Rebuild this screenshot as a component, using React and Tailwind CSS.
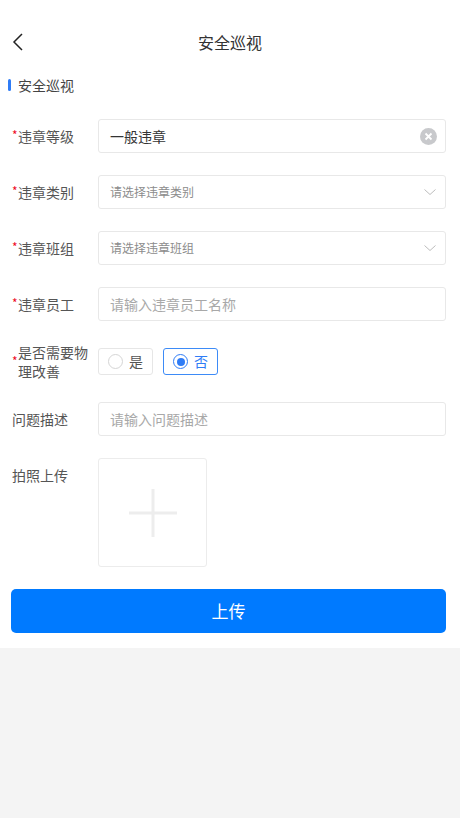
import React, { useState } from 'react';

const font = { fontFamily: '"Noto Sans CJK SC", "Noto Sans", sans-serif' };

const Label = ({ required, children }) => (
  <div className="w-[86px] shrink-0 flex items-center text-[14px] leading-[19px] text-[#555]">
    {required ? (
      <span className="w-[6px] shrink-0 text-[#ee0a24] text-[12px] leading-none -mt-[2px]">*</span>
    ) : null}
    <span className="w-[72px]">{children}</span>
  </div>
);

const Box = ({ children }) => (
  <div className="flex-1 h-[34px] border border-[#e8e8e8] rounded-[3px] flex items-center pl-[11px] pr-[8px]">
    {children}
  </div>
);

const Chevron = () => (
  <svg width="14" height="14" viewBox="0 0 14 14" className="ml-auto">
    <path d="M1.5 4.5 L7 9.5 L12.5 4.5" fill="none" stroke="#bdbdbd" strokeWidth="1" />
  </svg>
);

const App = () => {
  const [improve, setImprove] = useState(false);

  return (
    <div className="min-h-screen bg-[#f4f4f4]" style={font}>
      <div className="bg-white pb-[15px]">
        <div className="h-[60px] mt-[12px] relative flex items-center justify-center">
          <svg width="14" height="20" viewBox="0 0 14 20" className="absolute left-[11px] top-[20px]">
            <path d="M11 2 L3 10 L11 18" fill="none" stroke="#222" strokeWidth="1.5" />
          </svg>
          <span className="text-[16px] text-[#333]">安全巡视</span>
        </div>

        <div className="h-[26px] flex items-center pl-[8px]">
          <span className="w-[3px] h-[12px] rounded-full bg-[#2f7cf6] mr-[7px]" />
          <span className="text-[14px] text-[#444]">安全巡视</span>
        </div>

        <div className="mt-[10px] px-[12px] pr-[14px]">
          <div className="h-[56px] flex items-center">
            <Label required>违章等级</Label>
            <Box>
              <span className="text-[14px] text-[#333]">一般违章</span>
              <span className="ml-auto w-[17px] h-[17px] rounded-full bg-[#c8c9cc] flex items-center justify-center">
                <svg width="9" height="9" viewBox="0 0 9 9">
                  <path d="M1.5 1.5 L7.5 7.5 M7.5 1.5 L1.5 7.5" stroke="#fff" strokeWidth="1.8" />
                </svg>
              </span>
            </Box>
          </div>

          <div className="h-[56px] flex items-center">
            <Label required>违章类别</Label>
            <Box>
              <span className="text-[12px] text-[#8c8c8c]">请选择违章类别</span>
              <Chevron />
            </Box>
          </div>

          <div className="h-[56px] flex items-center">
            <Label required>违章班组</Label>
            <Box>
              <span className="text-[12px] text-[#8c8c8c]">请选择违章班组</span>
              <Chevron />
            </Box>
          </div>

          <div className="h-[56px] flex items-center">
            <Label required>违章员工</Label>
            <Box>
              <span className="text-[14px] text-[#a8a8a8]">请输入违章员工名称</span>
            </Box>
          </div>

          <div className="h-[59px] flex items-center">
            <Label required>是否需要物理改善</Label>
            <div className="flex items-center gap-[10px]">
              <button
                onClick={() => setImprove(true)}
                className={`w-[55px] h-[27px] rounded-[3px] border flex items-center pl-[9px] gap-[6px] ${improve ? 'border-[#3d8bf7]' : 'border-[#e6e6e6]'}`}
              >
                <span className={`w-[15px] h-[15px] rounded-full border flex items-center justify-center ${improve ? 'border-[#2f7cf6]' : 'border-[#d5d5d5]'}`}>
                  {improve ? <span className="w-[8px] h-[8px] rounded-full bg-[#2f7cf6]" /> : null}
                </span>
                <span className={`text-[14px] ${improve ? 'text-[#2f7cf6]' : 'text-[#555]'}`}>是</span>
              </button>
              <button
                onClick={() => setImprove(false)}
                className={`w-[55px] h-[27px] rounded-[3px] border flex items-center pl-[9px] gap-[6px] ${!improve ? 'border-[#3d8bf7]' : 'border-[#e6e6e6]'}`}
              >
                <span className={`w-[15px] h-[15px] rounded-full border flex items-center justify-center ${!improve ? 'border-[#2f7cf6]' : 'border-[#d5d5d5]'}`}>
                  {!improve ? <span className="w-[8px] h-[8px] rounded-full bg-[#2f7cf6]" /> : null}
                </span>
                <span className={`text-[14px] ${!improve ? 'text-[#2f7cf6]' : 'text-[#555]'}`}>否</span>
              </button>
            </div>
          </div>

          <div className="h-[56px] flex items-center">
            <Label>问题描述</Label>
            <Box>
              <span className="text-[14px] text-[#a8a8a8]">请输入问题描述</span>
            </Box>
          </div>

          <div className="mt-[11px] flex items-start">
            <div className="h-[34px] flex items-center">
              <Label>拍照上传</Label>
            </div>
            <div className="w-[109px] h-[109px] border border-[#ececec] rounded-[3px] flex items-center justify-center">
              <svg width="50" height="50" viewBox="0 0 50 50">
                <path d="M25 1 V49 M1 25 H49" stroke="#ededed" strokeWidth="3" />
              </svg>
            </div>
          </div>
        </div>

        <div className="mt-[22px] px-[11px] pr-[14px]">
          <button className="w-full h-[44px] rounded-[5px] bg-[#007aff] text-white text-[17px]">上传</button>
        </div>
      </div>
    </div>
  );
};

export default App;
